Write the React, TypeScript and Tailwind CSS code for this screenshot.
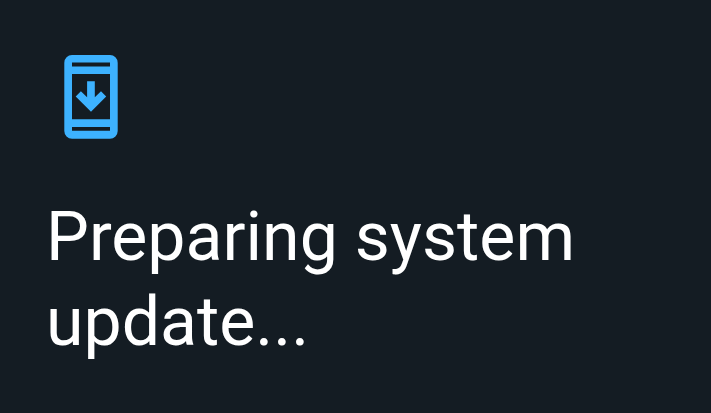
function SystemUpdateIcon() {
  return (
    <svg
      className="ml-[18px] h-[84px] w-[54px] text-[#3db2ff]"
      viewBox="0 0 54 84"
      fill="currentColor"
      aria-hidden="true"
    >
      <path
        fillRule="evenodd"
        d="M8 0H46A7.7 7.7 0 0 1 53.7 7.7V76A7.7 7.7 0 0 1 46 83.7H8A7.7 7.7 0 0 1 .3 76V7.7A7.7 7.7 0 0 1 8 0ZM8 7.5V11.5H46V7.5ZM8 19V64.3H46V19ZM8 72V75.8H46V72Z"
      />
      <path d="M23.1 26.3H30.8V42.3L37 36.3L42.2 41.5L27 56.8L11.7 41.5L16.9 36.3L23.1 42.3Z" />
    </svg>
  );
}

export default function App() {
  return (
    <main className="min-h-screen bg-[#141c23] px-[46px] pt-[55px] pb-12 font-['Roboto',sans-serif] text-white">
      <SystemUpdateIcon />
      <h1 className="mt-14 text-[68px] leading-[85px] font-normal">
        Preparing system update...
      </h1>
    </main>
  );
}
